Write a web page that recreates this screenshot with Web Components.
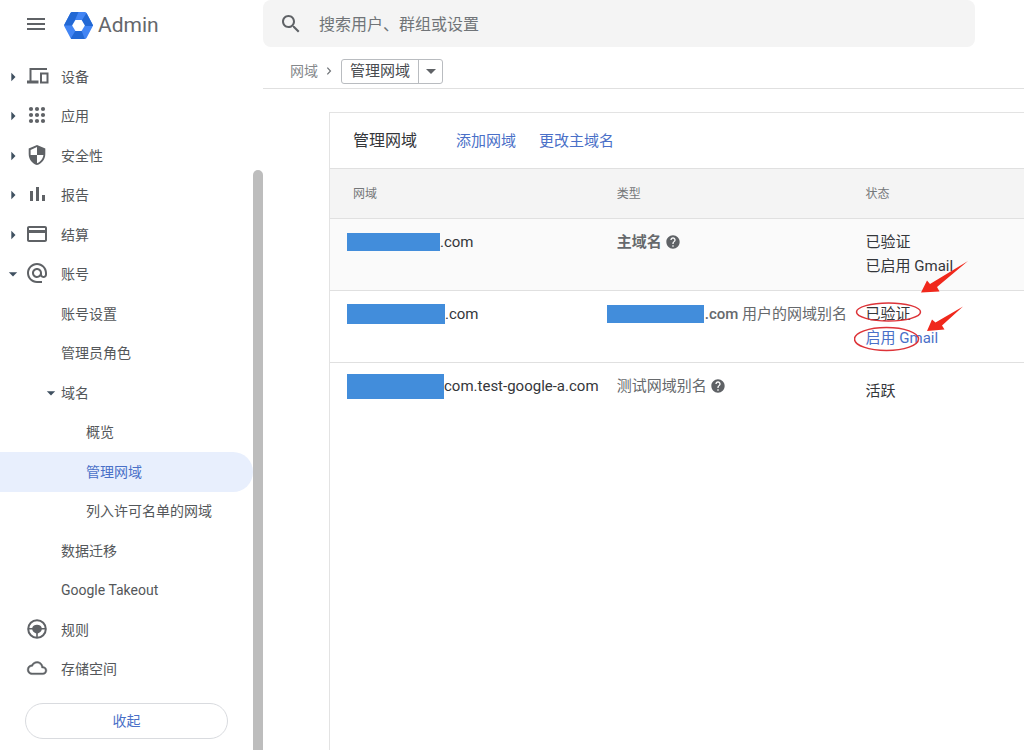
<!DOCTYPE html>
<html lang="zh-CN">
<head>
<meta charset="utf-8">
<title>管理网域 - Admin</title>
<style>
  html, body { margin: 0; height: 100%; }
  body {
    font: 14px/24px Roboto, "Noto Sans CJK SC", sans-serif;
    color: #54575a;
    background: #fff;
    overflow: hidden;
  }
</style>
</head>
<body>
<admin-shell>
  <side-nav slot="nav">
    <nav-item icon="devices" toggle="closed">设备</nav-item>
    <nav-item icon="apps" toggle="closed">应用</nav-item>
    <nav-item icon="shield" toggle="closed">安全性</nav-item>
    <nav-item icon="bars" toggle="closed">报告</nav-item>
    <nav-item icon="card" toggle="closed">结算</nav-item>
    <nav-item icon="at" toggle="open">账号</nav-item>
    <nav-item level="1">账号设置</nav-item>
    <nav-item level="1">管理员角色</nav-item>
    <nav-item level="1" toggle="open">域名</nav-item>
    <nav-item level="2">概览</nav-item>
    <nav-item level="2" selected>管理网域</nav-item>
    <nav-item level="2">列入许可名单的网域</nav-item>
    <nav-item level="1">数据迁移</nav-item>
    <nav-item level="1">Google Takeout</nav-item>
    <nav-item icon="wheel">规则</nav-item>
    <nav-item icon="cloud">存储空间</nav-item>
  </side-nav>
  <search-bar></search-bar>
  <bread-crumb></bread-crumb>
  <domain-card></domain-card>
</admin-shell>

<script>
const define = (name, html, setup) => {
  const template = document.createElement('template');
  template.innerHTML = html;
  customElements.define(name, class extends HTMLElement {
    connectedCallback() {
      if (this.shadowRoot) return;
      this.attachShadow({ mode: 'open' }).append(template.content.cloneNode(true));
      if (setup) setup(this, this.shadowRoot);
    }
  });
};

const dots = [6, 12, 18].flatMap(y => [6, 12, 18].map(x => `<circle cx="${x}" cy="${y}" r="2.1"/>`)).join('');

const ICONS = {
  menu: '<path d="M3 18h18v-2H3v2zm0-5h18v-2H3v2zm0-7v2h18V6H3z"/>',
  devices: '<g fill="none" stroke="currentColor" stroke-width="2"><path d="M22 5H5.500v12"/><rect x="16" y="9.500" width="6.500" height="9"/></g><path d="M2 16.500h11.500v3H2z"/>',
  apps: dots,
  shield: '<path d="M12 2L3.700 5.600v5.500c0 5.100 3.500 9.800 8.300 11 4.800-1.200 8.300-5.900 8.300-11V5.600L12 2zm0 10h6.400c-.5 3.800-3 7.100-6.400 8.200V12H5.600V6.900L12 4.100V12z"/>',
  bars: '<path d="M5 9h3v10H5zM11 5h3v14h-3zM17 13h3v6h-3z"/>',
  card: '<path d="M20 4H4c-1.110 0-1.990.89-1.990 2L2 18c0 1.110.89 2 2 2h16c1.110 0 2-.89 2-2V6c0-1.110-.89-2-2-2zm0 14H4v-7h16v7zm0-10H4V6h16v2z"/>',
  at: '<path d="M12 2C6.480 2 2 6.480 2 12s4.480 10 10 10h5v-2h-5c-4.340 0-8-3.660-8-8s3.660-8 8-8 8 3.660 8 8v1.430c0 .79-.71 1.570-1.500 1.570s-1.500-.78-1.500-1.570V12c0-2.760-2.240-5-5-5s-5 2.240-5 5 2.240 5 5 5c1.380 0 2.640-.56 3.540-1.470.65.89 1.770 1.470 2.960 1.470 1.970 0 3.500-1.600 3.500-3.570V12c0-5.520-4.480-10-10-10zm0 13c-1.660 0-3-1.340-3-3s1.340-3 3-3 3 1.340 3 3-1.340 3-3 3z"/>',
  wheel: '<circle cx="12" cy="12" r="8.800" fill="none" stroke="currentColor" stroke-width="2"/><path d="M3 11h4.200C7.800 9 9.600 7.800 12 7.800s4.200 1.200 4.800 3.200H21v1.600h-4.200c-.6 2-2 3.400-4 3.900V21h-1.600v-4.500c-2-.5-3.400-1.900-4-3.900H3z"/>',
  cloud: '<path transform="translate(2.200 2.200) scale(.82)" stroke="currentColor" stroke-width=".5" d="M19.350 10.040C18.670 6.590 15.640 4 12 4 9.110 4 6.600 5.640 5.350 8.040 2.340 8.360 0 10.910 0 14c0 3.310 2.690 6 6 6h13c2.760 0 5-2.240 5-5 0-2.640-2.050-4.780-4.650-4.960zM19 18H6c-2.210 0-4-1.790-4-4 0-2.050 1.530-3.760 3.560-3.970l1.070-.11.5-.95C8.080 7.140 9.940 6 12 6c2.620 0 4.880 1.860 5.390 4.430l.3 1.500 1.530.11c1.560.1 2.780 1.410 2.780 2.960 0 1.650-1.350 3-3 3z"/>',
  search: '<path d="M15.500 14h-.79l-.28-.27C15.410 12.590 16 11.110 16 9.500 16 5.910 13.090 3 9.500 3S3 5.910 3 9.500 5.910 16 9.500 16c1.610 0 3.090-.59 4.230-1.570l.27.28v.79l5 4.990L20.490 19l-4.990-5zm-6 0C7.010 14 5 11.990 5 9.500S7.010 5 9.500 5 14 7.010 14 9.500 11.990 14 9.500 14z"/>',
  help: '<path d="M12 2C6.480 2 2 6.480 2 12s4.480 10 10 10 10-4.480 10-10S17.520 2 12 2zm1 17h-2v-2h2v2zm2.070-7.750l-.9.92C13.450 12.900 13 13.500 13 15h-2v-.5c0-1.100.45-2.100 1.170-2.830l1.240-1.260c.37-.36.59-.86.59-1.410 0-1.100-.9-2-2-2s-2 .9-2 2H8c0-2.210 1.790-4 4-4s4 1.790 4 4c0 .88-.36 1.680-.93 2.250z"/>',
  chevron: '<path d="M8 4l7.500 8L8 20" fill="none" stroke="currentColor" stroke-width="3"/>',
  right: '<path d="M8 2l10 10L8 22z"/>',
  down: '<path d="M2 8h20L12 18z"/>'
};

define('app-icon', `
<style>
  :host { display: block; flex: none; width: 24px; height: 24px; color: #5f6266; }
  svg { display: block; width: 100%; height: 100%; fill: currentColor; }
</style>
<svg viewBox="0 0 24 24" aria-hidden="true"></svg>`,
(host, root) => { root.querySelector('svg').innerHTML = ICONS[host.getAttribute('name')] || ''; });

define('admin-shell', `
<style>
  :host { display: grid; grid-template-columns: 253px 10px minmax(0, 1fr); height: 100vh; }
  .track { display: flex; padding-top: 170px; }
  .thumb { flex: 1; background: #bdbdbd; border-radius: 5px 5px 0 0; }
  main { display: flex; flex-direction: column; min-width: 0; }
</style>
<slot name="nav"></slot>
<div class="track"><div class="thumb"></div></div>
<main><slot></slot></main>`);

define('side-nav', `
<style>
  :host { display: flex; flex-direction: column; min-height: 0; }
  header { display: flex; align-items: center; height: 50px; padding: 0 24px; margin-bottom: 7px; }
  .menu { border: 0; padding: 0 0 2px; background: none; }
  .logo { width: 29px; height: 27px; margin: 0 5px 0 16px; }
  .brand { font-size: 21px; color: #64676b; }
  nav { flex: 1; display: grid; grid-auto-rows: 1fr; }
  footer { padding: 14px 25px 11px; }
  .collapse {
    width: 100%; height: 36px; box-sizing: border-box; border: 1px solid #d9dbdf;
    border-radius: 18px; background: #fff; color: #4a70c8; font: inherit;
  }
</style>
<header>
  <button class="menu" aria-label="菜单"><app-icon name="menu"></app-icon></button>
  <svg class="logo" viewBox="0 0 30 28" aria-hidden="true">
    <path d="M8.500 0h13q1.200 0 1.800 1l6.300 12q.6 1 0 2l-6.300 12q-.6 1-1.800 1h-13q-1.200 0-1.800-1L.4 15q-.6-1 0-2L6.700 1q.6-1 1.800-1z" fill="#4285f4"/>
    <path d="M6.700 1q.6-1 1.800-1H15l-3.500 8L8.500 14H.1q0-.5.300-1zM23.300 1l6.300 12q.4.500.4 1.500h-8.500l-3-6zM21.500 28H8.500q-1 0-1.500-.6L11.800 19.500h6.400z" fill="#2268d4"/>
    <path d="M11.800 8.200h6.400l3.400 5.800-3.400 5.800h-6.400L8.400 14z" fill="#fff"/>
  </svg>
  <span class="brand">Admin</span>
</header>
<nav aria-label="主导航"><slot></slot></nav>
<footer><button class="collapse">收起</button></footer>`);

define('nav-item', `
<style>
  :host { display: grid; min-height: 0; }
  a {
    display: flex; align-items: center; box-sizing: border-box; padding-left: 8px;
    color: inherit; text-decoration: none; border-radius: 0 20px 20px 0; white-space: nowrap;
  }
  .toggle { width: 10px; height: 10px; color: #3f5060; }
  .icon { margin: 0 12px 2px 7px; }
  :host([level="1"]) a { padding-left: 46px; }
  :host([level="1"]) .toggle { margin-right: 5px; }
  :host([level="2"]) a { padding-left: 71px; }
  :host([level="2"]) .toggle { margin-right: 5px; }
  :host([level]) .icon { display: none; }
  :host([selected]) a { background: #e8effd; color: #4a70c8; }
</style>
<a href="#"><app-icon class="toggle"></app-icon><app-icon class="icon"></app-icon><slot></slot></a>`,
(host, root) => {
  const arrows = { closed: 'right', open: 'down' };
  const set = (sel, name) => {
    const old = root.querySelector(sel);
    const icon = document.createElement('app-icon');
    icon.className = old.className;
    icon.setAttribute('name', name || '');
    old.replaceWith(icon);
  };
  set('.toggle', arrows[host.getAttribute('toggle')]);
  set('.icon', host.getAttribute('icon'));
  if (host.hasAttribute('selected')) root.querySelector('a').setAttribute('aria-current', 'page');
});

define('search-bar', `
<style>
  :host { display: block; padding-right: 49px; }
  label {
    display: flex; align-items: center; gap: 16px; height: 47px; padding: 0 16px;
    background: #f4f4f4; border-radius: 8px;
  }
  input {
    flex: 1; min-width: 0; height: 34px; padding: 2px 0 0; box-sizing: border-box; border: 0; outline: 0; background: none;
    font: inherit; font-size: 16px; color: #5f6368;
  }
  input::placeholder { color: #707478; opacity: 1; }
</style>
<label><app-icon name="search"></app-icon><input type="search" aria-label="搜索" placeholder="搜索用户、群组或设置"></label>`);

define('bread-crumb', `
<style>
  :host {
    display: flex; align-items: center; height: 41px; box-sizing: content-box;
    padding-left: 27px; border-bottom: 1px solid #e0e0e0;
  }
  nav { display: flex; align-items: center; padding-top: 7px; }
  a { color: #85888c; text-decoration: none; }
  .sep { width: 10px; height: 10px; margin: 0 7px 0 6px; color: #707478; }
  .picker { position: relative; }
  select {
    appearance: none; display: block; width: 102px; height: 25px; box-sizing: border-box; margin: 0;
    padding: 0 32px 0 8px; border: 1px solid #b9bcc0; border-radius: 3px; background: #fff;
    font: inherit; font-size: 15px; line-height: 22px; color: #484b4f;
  }
  .arrow {
    position: absolute; top: 1px; bottom: 1px; right: 1px; width: 24px;
    display: grid; place-items: center; border-left: 1px solid #b9bcc0; pointer-events: none;
    box-sizing: border-box;
  }
  .arrow app-icon { width: 12px; height: 12px; }
</style>
<nav aria-label="路径">
  <a href="#">网域</a>
  <app-icon class="sep" name="chevron"></app-icon>
  <span class="picker">
    <select aria-label="当前页面"><option>管理网域</option></select>
    <span class="arrow"><app-icon name="down"></app-icon></span>
  </span>
</nav>`);

define('redacted-name', `
<style>
  :host { display: block; flex: none; background: #428ddb; width: 97px; height: 18px; }
</style>`);

define('callout-marks', `
<style>
  :host { position: absolute; left: -12px; top: -43px; width: 116px; height: 94px; pointer-events: none; }
  svg { display: block; }
</style>
<svg width="116" height="94" viewBox="0 0 116 94" aria-hidden="true">
  <g fill="none" stroke="#dd3338" stroke-width="1.500">
    <ellipse cx="34.500" cy="53" rx="32" ry="9"/>
    <ellipse cx="32.500" cy="80" rx="32" ry="11.500"/>
  </g>
  <g fill="#f0281c">
    <path d="M67 33.500L73 21.500L76 25L114 2L83 28L85.500 32.500Z"/>
    <path d="M73 72L78 60.500L81.500 63.500L109 47.500L88 66.500L90.500 70.500Z"/>
  </g>
</svg>`);

define('domain-card', `
<style>
  :host {
    display: block; flex: 1; margin: 23px 0 0 66px; border: solid #e3e3e3; border-width: 1px 0 0 1px;
    font-size: 15px; overflow: hidden;
  }
  header { display: flex; align-items: center; gap: 23px; height: 55px; padding-left: 23px; }
  h1 { margin: 0 16px 0 0; font-size: 16px; font-weight: 400; color: #34363a; }
  a { color: #4a70c8; text-decoration: none; }
  table { width: 100%; border-collapse: collapse; table-layout: fixed; }
  .domain { width: 38%; }
  .kind { width: 36%; }
  th, td {
    box-sizing: border-box; text-align: left; white-space: nowrap; vertical-align: top;
    border-top: 1px solid #e0e0e0;
  }
  th { height: 50px; padding: 0 0 0 23px; vertical-align: middle; font-size: 12px; font-weight: 400; color: #747779; background: #f4f4f4; }
  td { height: 72px; padding: 11px 0 0 23px; color: #34363a; }
  th:last-child, td:last-child { padding-left: 22px; }
  td:first-child { padding-left: 17px; }
  .line { display: flex; align-items: center; height: 24px; }
  .type { color: #66696c; gap: 3px; }
  .alias { gap: 1px; margin-left: -10px; }
  .primary td { background: #fafafa; }
  .help { width: 16px; height: 16px; }
  .marked { position: relative; }
  .late { padding-top: 16px; }
  .w1 { width: 93px; }
  .w2 { width: 98px; height: 20px; }
  .w3 { width: 97px; height: 25px; }
  b { font-weight: 500; }
</style>
<header><h1>管理网域</h1><a href="#">添加网域</a><a href="#">更改主域名</a></header>
<table>
  <thead><tr><th class="domain" scope="col">网域</th><th class="kind" scope="col">类型</th><th scope="col">状态</th></tr></thead>
  <tbody>
    <tr class="primary">
      <td><div class="line"><redacted-name class="w1"></redacted-name>.com</div></td>
      <td><div class="line type"><strong>主域名</strong><app-icon class="help" name="help"></app-icon></div></td>
      <td><div class="line">已验证</div><div class="line">已启用 Gmail</div></td>
    </tr>
    <tr>
      <td><div class="line"><redacted-name class="w2"></redacted-name>.com</div></td>
      <td><div class="line type alias"><redacted-name></redacted-name><span><b>.com</b> 用户的网域别名</span></div></td>
      <td><div class="marked"><div class="line">已验证</div><div class="line"><a href="#">启用 Gmail</a></div><callout-marks></callout-marks></div></td>
    </tr>
    <tr>
      <td><div class="line"><redacted-name class="w3"></redacted-name>com.test-google-a.com</div></td>
      <td><div class="line type">测试网域别名<app-icon class="help" name="help"></app-icon></div></td>
      <td class="late"><div class="line">活跃</div></td>
    </tr>
  </tbody>
</table>`);
</script>
</body>
</html>
